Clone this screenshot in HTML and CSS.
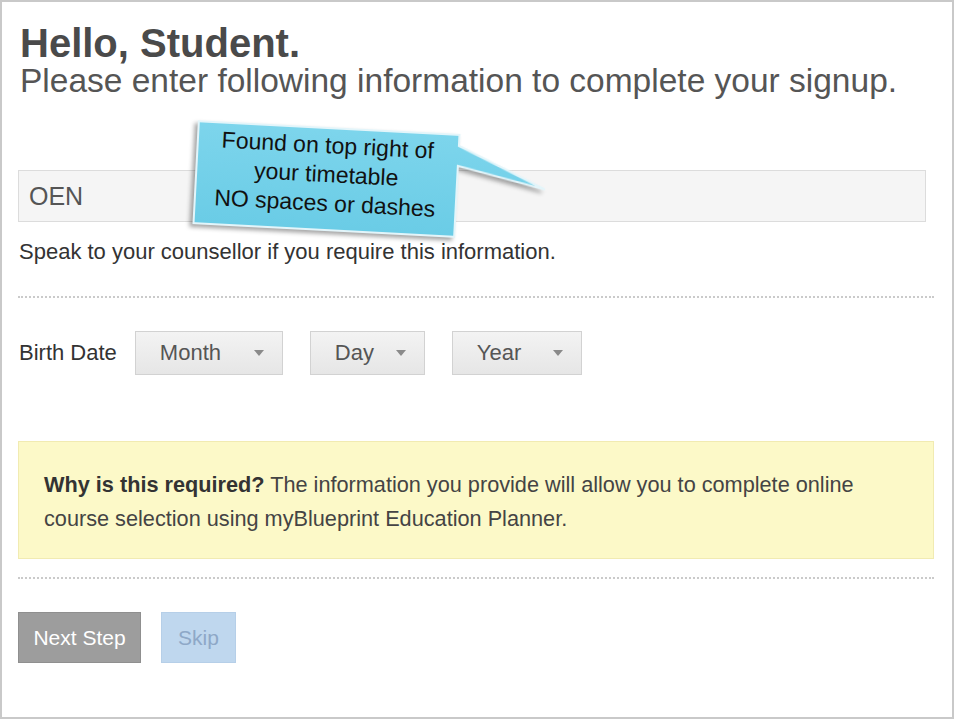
FILE: index.html
```html
<!DOCTYPE html>
<html lang="en">
<head>
  <meta charset="UTF-8">
  <title>Student Signup</title>
  <link rel="stylesheet" href="styles.css">
</head>
<body>

  <div class="frame">
    <h1>Hello, Student.</h1>
    <p class="subtitle">Please enter following information to complete your signup.</p>

    <div class="oen-input">OEN</div>
    <p class="hint">Speak to your counsellor if you require this information.</p>

    <div class="divider"></div>

    <div class="birth-row">
      <span class="birth-label">Birth Date</span>
      <div class="select select-month">Month <span class="caret"></span></div>
      <div class="select select-day">Day <span class="caret"></span></div>
      <div class="select select-year">Year <span class="caret"></span></div>
    </div>

    <div class="notice">
      <p class="notice-text"><b>Why is this required?</b> The information you provide will allow you to complete online
      course selection using myBlueprint Education Planner.</p>
    </div>

    <div class="divider"></div>

    <div class="actions">
      <button class="btn btn-next">Next Step</button>
      <button class="btn btn-skip">Skip</button>
    </div>

    <!-- annotation bubble over the OEN field -->
    <div class="callout">
      <svg class="callout-shape" width="360" height="110" viewBox="0 0 360 110">
        <defs>
          <linearGradient id="bubble" x1="0" y1="0" x2="0" y2="1">
            <stop offset="0" stop-color="#7dd5ec"/>
            <stop offset="1" stop-color="#6acce6"/>
          </linearGradient>
        </defs>
        <path d="M1,1 H262 V12 L350,51 L262,32 V103 H1 Z" fill="url(#bubble)" stroke="#e3f5fa" stroke-width="2"/>
      </svg>
      <div class="callout-text">Found on top right of<br>your timetable<br>NO spaces or dashes</div>
    </div>
  </div>

</body>
</html>
```

FILE: styles.css
```css
body {
  margin: 0;
  font-family: 'Liberation Sans', Arial, sans-serif;
  background: white;
}
.frame {
  position: relative;
  box-sizing: border-box;
  width: 954px;
  height: 719px;
  border: 2px solid #c9c9c9;
  padding: 21px 16px 0 16px;
}
h1 {
  margin: 0;
  font-size: 40px;
  line-height: 40px;
  color: #4a4a4a;
  padding-left: 2px;
}
.subtitle {
  margin: 0;
  font-size: 33.5px;
  line-height: 36px;
  color: #555;
  padding-left: 2px;
}
.oen-input {
  margin-top: 71px;
  width: 908px;
  height: 52px;
  box-sizing: border-box;
  border: 1px solid #dcdcdc;
  background: #f5f5f5;
  font-size: 25px;
  line-height: 50px;
  color: #555;
  padding-left: 10px;
}
.hint {
  margin: 17px 0 0 1px;
  font-size: 22px;
  line-height: 26px;
  color: #333;
}
.divider {
  margin-top: 31px;
  border-top: 2px dotted #cacaca;
  width: 916px;
}
.birth-row {
  display: flex;
  align-items: center;
  margin-top: 33px;
  height: 44px;
}
.birth-label {
  font-size: 22px;
  color: #333;
  margin-left: 1px;
  margin-right: 18px;
}
.select {
  display: flex;
  align-items: center;
  justify-content: space-between;
  box-sizing: border-box;
  height: 44px;
  border: 1px solid #d2d2d2;
  background: linear-gradient(#f3f3f3, #e6e6e6);
  font-size: 22px;
  color: #555;
  padding: 0 18px 0 24px;
  margin-right: 27px;
}
.select-month { width: 148px; }
.select-day { width: 115px; }
.select-year { width: 130px; }
.caret {
  width: 0;
  height: 0;
  border-left: 5px solid transparent;
  border-right: 5px solid transparent;
  border-top: 6px solid #8a8a8a;
}
.notice {
  margin-top: 66px;
  width: 916px;
  box-sizing: border-box;
  height: 118px;
  background: #fcf9c8;
  border: 1px solid #f1ebb2;
  padding: 26px 26px 0 25px;
}
.notice-text {
  margin: 0;
  font-size: 21.7px;
  line-height: 34px;
  color: #444;
}
.notice-text b {
  color: #333;
}
.notice + .divider {
  margin-top: 18px;
}
.actions {
  display: flex;
  gap: 20px;
  margin-top: 33px;
}
.btn {
  height: 51px;
  border: 1px solid #8f8f8f;
  font-family: 'Liberation Sans', Arial, sans-serif;
  font-size: 21px;
  padding: 0;
  white-space: nowrap;
  cursor: pointer;
}
.btn-next {
  width: 123px;
  background: #9d9d9d;
  color: white;
}
.btn-skip {
  width: 75px;
  background: #bfd7ee;
  border-color: #b6cfe8;
  color: #8ea8c7;
}
.callout {
  position: absolute;
  left: 193px;
  top: 125px;
  width: 262px;
  height: 104px;
  transform: rotate(3deg);
}
.callout-shape {
  position: absolute;
  left: 0;
  top: 0;
  overflow: visible;
  filter: drop-shadow(-3px 3px 2px rgba(0,0,0,0.35));
}
.callout-text {
  position: relative;
  text-align: center;
  font-size: 23px;
  line-height: 29px;
  color: #111;
  padding-top: 4px;
}
```
